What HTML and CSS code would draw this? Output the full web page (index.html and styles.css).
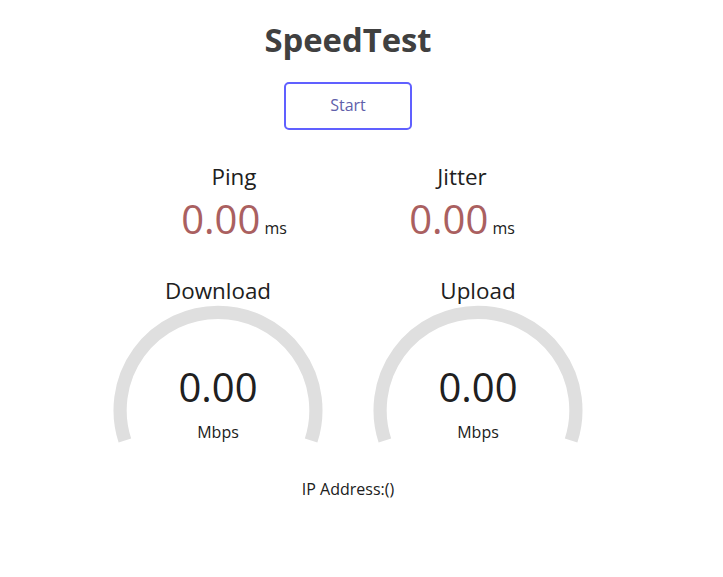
FILE: index.html
```html
<!DOCTYPE html>
<html>
<head>
<meta charset="utf-8">
<title>SpeedTest</title>
<link rel="stylesheet" href="styles.css">
</head>
<body>
<div class="page">
  <h1 class="title">SpeedTest</h1>
  <div class="wrapper">
    <div class="start-btn">Start</div>
    <div class="test">
      <div class="test-group">
        <div class="small-area">
          <div class="small-name">Ping</div>
          <div class="small-value"><span class="small-num">0.00</span> <span class="small-unit">ms</span></div>
        </div>
        <div class="small-area">
          <div class="small-name">Jitter</div>
          <div class="small-value"><span class="small-num">0.00</span> <span class="small-unit">ms</span></div>
        </div>
      </div>
      <div class="test-group">
        <div class="gauge-area">
          <div class="gauge-name">Download</div>
          <svg class="gauge" width="256" height="200" viewBox="0 0 256 200">
            <path d="M34.89 166.45 A97.9 97.9 0 1 1 221.11 166.45" fill="none" stroke="#dfdfdf" stroke-width="13.2"/>
          </svg>
          <div class="gauge-value">0.00</div>
          <div class="gauge-unit">Mbps</div>
        </div>
        <div class="gauge-area">
          <div class="gauge-name">Upload</div>
          <svg class="gauge" width="256" height="200" viewBox="0 0 256 200">
            <path d="M34.89 166.45 A97.9 97.9 0 1 1 221.11 166.45" fill="none" stroke="#dfdfdf" stroke-width="13.2"/>
          </svg>
          <div class="gauge-value">0.00</div>
          <div class="gauge-unit">Mbps</div>
        </div>
      </div>
      <div class="ip-area">IP Address:()</div>
    </div>
  </div>
</div>
</body>
</html>
```
FILE: styles.css
```css
html, body {
  margin: 0;
  padding: 0;
  background: #ffffff;
  color: #202020;
}
body {
  font-family: "Open Sans", "Noto Sans", sans-serif;
  font-size: 16px;
}
.page {
  width: 696px;
  text-align: center;
}
.title {
  margin: 19px 0 21px;
  font-size: 32.8px;
  font-weight: 700;
  color: #404040;
  line-height: 42px;
}
.wrapper {
  display: flex;
  flex-direction: column;
  align-items: center;
}
.start-btn {
  box-sizing: border-box;
  width: 128px;
  height: 48px;
  border: 2px solid #6060ff;
  border-radius: 5px;
  color: #6060aa;
  line-height: 43px;
  font-size: 16px;
}
.test {
  margin-top: 32px;
  width: 100%;
}
.test-group {
  display: flex;
  justify-content: center;
  gap: 4px;
}
.small-area {
  width: 224px;
  height: 112px;
  text-align: center;
}
.small-name {
  font-size: 22.4px;
  line-height: 30px;
}
.small-value {
  line-height: 54px;
}
.small-num {
  font-size: 40px;
  color: #aa6060;
}
.small-unit {
  font-size: 16px;
}
.gauge-area {
  position: relative;
  width: 256px;
  height: 200px;
}
.gauge {
  position: absolute;
  top: 0;
  left: 0;
}
.gauge-name {
  position: absolute;
  top: 2px;
  left: 0;
  width: 100%;
  font-size: 22.4px;
  line-height: 30px;
}
.gauge-value {
  position: absolute;
  bottom: 60px;
  left: 0;
  width: 100%;
  font-size: 40px;
  line-height: 54px;
}
.gauge-unit {
  position: absolute;
  bottom: 31px;
  left: 0;
  width: 100%;
  line-height: 22px;
}
.ip-area {
  margin-top: 4px;
  line-height: 22px;
}
```
